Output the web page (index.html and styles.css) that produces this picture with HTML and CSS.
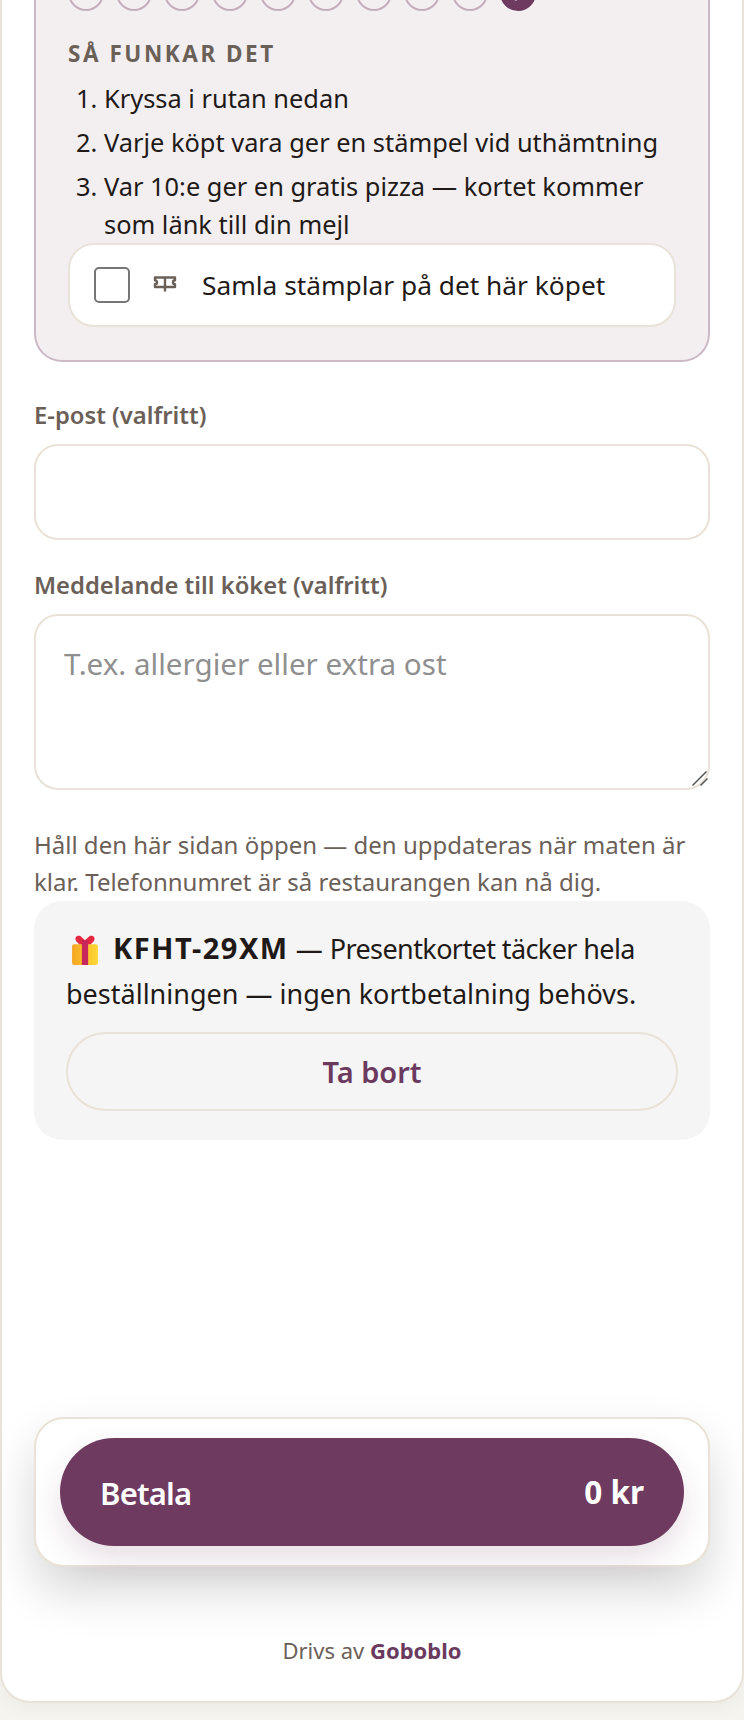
FILE: index.html
```html
<!DOCTYPE html>
<html lang="sv">
<head>
<meta charset="utf-8">
<title>Kassa</title>
<link rel="stylesheet" href="styles.css">
</head>
<body>
<main class="card">
  <section class="loyalty">
    <div class="stamps">
      <span class="stamp"></span><span class="stamp"></span><span class="stamp"></span><span class="stamp"></span><span class="stamp"></span>
      <span class="stamp"></span><span class="stamp"></span><span class="stamp"></span><span class="stamp"></span>
      <span class="stamp stamp-full"><svg viewBox="0 0 24 24" width="22" height="22"><path d="M5 4 L14 4 L9 20" fill="none" stroke="#fff" stroke-width="3"/></svg></span>
    </div>
    <h3 class="how">SÅ FUNKAR DET</h3>
    <ol class="steps">
      <li>Kryssa i rutan nedan</li>
      <li>Varje köpt vara ger en stämpel vid uthämtning</li>
      <li>Var 10:e ger en gratis pizza — kortet kommer som länk till din mejl</li>
    </ol>
    <label class="optin">
      <span class="box"></span>
      <svg class="ticket" viewBox="0 0 24 16" width="24" height="16"><path d="M2 1.5 H22 V4.2 A2 2 0 0 0 22 8.2 V11 H2 V8.2 A2 2 0 0 0 2 4.2 Z M12 1.5 V15.5" fill="none" stroke="#6b6058" stroke-width="2.4" stroke-linejoin="round"/></svg>
      <span>Samla stämplar på det här köpet</span>
    </label>
  </section>

  <label class="label label-first">E-post (valfritt)</label>
  <div class="field field-input"></div>

  <label class="label label-second">Meddelande till köket (valfritt)</label>
  <div class="area-wrap">
    <textarea class="field field-area" placeholder="T.ex. allergier eller extra ost"></textarea>
    <svg class="grip" viewBox="0 0 16 16" width="16" height="16"><path d="M.5 14.5 14.5 .5M8.5 14.5 15.5 7.5" fill="none" stroke="#555" stroke-width="1.5"/></svg>
  </div>

  <p class="hint">Håll den här sidan öppen — den uppdateras när maten är klar. Telefonnumret är så restaurangen kan nå dig.</p>

  <section class="gift">
    <p class="gift-text"><svg class="gift-icon" viewBox="0 0 27 29" width="28" height="30"><defs><linearGradient id="boxfill" x1="0" x2="1" y1="0" y2="0"><stop offset="0" stop-color="#f5a623"/><stop offset="1" stop-color="#fdd835"/></linearGradient></defs><rect x="1" y="9" width="25" height="20" rx="2" fill="url(#boxfill)"/><path d="M9 1 C5 0 3 3 5 6 L8 9 H19 L22 6 C24 3 22 0 18 1 L13.5 5 Z" fill="#e5273f"/><rect x="10.5" y="5" width="6" height="24" fill="#c8275b"/></svg> <strong class="code">KFHT-29XM</strong> — <span class="tight">Presentkortet täcker hela</span> beställningen — ingen kortbetalning behövs.</p>
    <button class="remove">Ta bort</button>
  </section>

  <div class="paybar">
    <button class="pay"><span class="pay-label">Betala</span><span class="pay-sum">0 kr</span></button>
  </div>

  <footer class="foot">Drivs av <strong class="brand">Goboblo</strong></footer>
</main>
</body>
</html>
```

FILE: styles.css
```css
* { box-sizing: border-box; }
html, body { margin: 0; height: 1720px; overflow: hidden; }
body {
  background: #f6f4ef;
  color: #1f1a17;
  font-family: "Noto Sans", "Open Sans", sans-serif;
  font-size: 25.4px;
}
.card {
  margin: -60px 0 0;
  height: 1763px;
  background: #fff;
  border: 2px solid #e8e2d8;
  border-top: 0;
  border-radius: 0 0 30px 30px;
  padding: 0 32px;
  box-shadow: 0 6px 20px rgba(0,0,0,.04);
}
.loyalty {
  background: #f3eff1;
  border: 2px solid #cdb9c6;
  border-top: 0;
  border-radius: 0 0 28px 28px;
  padding: 35px 32px 32px;
  height: 422px;
}
.stamps { display: flex; gap: 12px; }
.stamp {
  width: 36px; height: 36px;
  border-radius: 50%;
  border: 2px solid #c4aebc;
  display: flex; align-items: center; justify-content: center;
  flex: none;
}
.stamp-full { background: #6e3a5f; border-color: #6e3a5f; }
.how {
  margin: 29px 0 0;
  font-size: 22.5px;
  line-height: 28px;
  font-weight: 700;
  letter-spacing: 2.55px;
  color: #6b6058;
}
.steps {
  margin: 11px 0 0;
  padding: 0 0 0 36px;
  list-style: decimal;
}
.steps li { line-height: 38px; margin-bottom: 6px; }
.optin {
  display: flex;
  align-items: center;
  height: 84px;
  margin-top: -6px;
  padding: 0 24px;
  background: #fff;
  border: 2px solid #e8e2d8;
  border-radius: 26px;
  font-size: 26.3px;
}
.box {
  width: 36px; height: 36px;
  border: 2px solid #767676;
  border-radius: 5px;
  flex: none;
}
.ticket { margin: -2px 25px 0 23px; flex: none; }
.label {
  display: block;
  font-size: 23.8px;
  line-height: 32px;
  font-weight: 600;
  color: #6b6058;
}
.label-first { margin-top: 37px; }
.label-second { margin-top: 29px; }
.field {
  display: block;
  width: 100%;
  margin: 13px 0 0;
  background: #fff;
  border: 2px solid #e8e2d8;
  border-radius: 24px;
}
.field-input { height: 96px; }
.area-wrap { position: relative; }
.field-area {
  height: 176px;
  padding: 29px 28px;
  font: inherit;
  font-size: 29.6px;
  line-height: 38px;
  resize: none;
  outline: 0;
}
.field-area::placeholder { color: #8f8f8f; }
.grip { position: absolute; right: 2px; bottom: 3px; }
.hint {
  margin: 36px 0 0;
  font-size: 24px;
  line-height: 37px;
  color: #6b6058;
}
.gift {
  height: 239px;
  margin-top: 1px;
  padding: 24px 32px;
  background: #f5f5f5;
  border-radius: 28px;
}
.gift-text { margin: 0; font-size: 27px; line-height: 45px; }
.gift-icon { vertical-align: -6px; margin: 0 7px 0 5px; }
.code { letter-spacing: 1.5px; font-weight: 700; font-size: 29px; }
.tight { letter-spacing: -.6px; }
.remove {
  display: block;
  width: 100%;
  height: 79px;
  margin-top: 16px;
  background: transparent;
  border: 2px solid #e8e2d8;
  border-radius: 40px;
  color: #6b3a5e;
  font: inherit;
  font-size: 29px;
  font-weight: 600;
}
.paybar {
  margin-top: 277px;
  height: 150px;
  padding: 19px 24px;
  background: #fff;
  border: 2px solid #e8e2d8;
  border-radius: 30px;
  box-shadow: 0 24px 48px rgba(0,0,0,.16);
}
.pay {
  width: 100%;
  height: 108px;
  padding: 0 40px 2px;
  display: flex;
  justify-content: space-between;
  align-items: center;
  background: #6e3a5f;
  border: 0;
  border-radius: 54px;
  color: #fff;
  font: inherit;
  font-size: 31.5px;
  font-weight: 700;
  box-shadow: 0 14px 30px rgba(110,58,95,.16);
}
.pay-label { padding-top: 4px; font-size: 31px; font-weight: 600; letter-spacing: -.8px; }
.foot {
  margin-top: 69px;
  text-align: center;
  font-size: 22px;
  line-height: 28px;
  color: #6b6058;
}
.brand { color: #6b3a5e; font-weight: 700; }
```
